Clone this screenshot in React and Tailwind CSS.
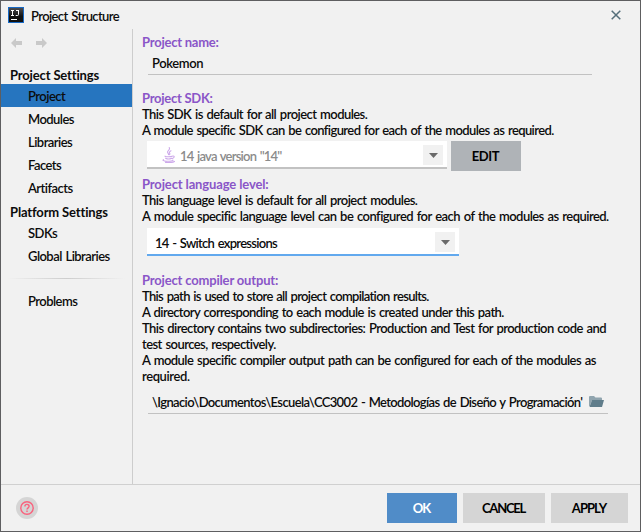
import React from "react";

const body = "tracking-[-0.54px] [word-spacing:1px]";

function Heading({ children, className = "" }) {
  return <h2 className={`whitespace-nowrap font-bold leading-[16px] text-[#8a56c8] ${className}`}>{children}</h2>;
}

function Line({ children, className = "" }) {
  return <p className={`h-4 whitespace-nowrap leading-[16px] ${className || body}`}>{children}</p>;
}

function NavItem({ children, active }) {
  return (
    <li className={`flex h-[23px] items-center whitespace-nowrap pl-[27px] pt-0.5 ${active ? "bg-[#2675bf]" : ""} ${body}`}>
      {children}
    </li>
  );
}

function ArrowButton() {
  return (
    <span className="mt-0.5 flex size-5 items-center justify-center bg-[#f1f1f1]">
      <svg width="9" height="5" viewBox="0 0 9 5"><path d="M0 0h9L4.5 5z" fill="#6a6a6a" /></svg>
    </span>
  );
}

function NavArrow({ flip }) {
  return (
    <svg width="11" height="10" viewBox="0 0 11 10" className={flip ? "-scale-x-100" : ""}>
      <path d="M0 5L5 0v3h6v4H5v3z" fill="#c9c9c9" />
    </svg>
  );
}

function Cup() {
  return (
    <svg width="14" height="16" viewBox="0 0 14 16" fill="none" stroke="#cda9ea" strokeWidth="1.1" strokeLinecap="round" className="mt-0.5">
      <path d="M7.2.6c1.8 2-3 3.3-1.4 5.2.4.6.9 1 .7 1.9M9 3.8C7.6 4.6 7 5.3 7.7 6.4c.3.5.2.9-.2 1.3" />
      <path d="M3 9.2c1.5.8 5.8.7 7.2 0M3.6 11.2c1.5.8 4.6.7 6 0M10.7 9c2-.4 2.2 1.7-.4 2.5M1.5 12.7c-2.2 1.2 3 1.7 6 1.5 2.2-.1 4-.5 3.4-1.2M3.5 15.4c3 .4 7 .1 9-1" />
    </svg>
  );
}

export default function App() {
  return (
    <div className="flex h-[532px] w-[641px] flex-col overflow-hidden border border-[#5e5e60] bg-[#f1f1f1] font-['Lato','Noto_Sans',sans-serif] text-[13px] font-semibold text-[#0c0c0c]">
      <header className="flex h-7 shrink-0 items-center pl-[7px] pr-[19px]">
        <svg width="16" height="16" viewBox="0 0 16 16">
          <defs>
            <linearGradient id="tile" x1="0" y1="0" x2="0" y2="1">
              <stop offset="0" stopColor="#4b4b4d" />
              <stop offset="0.6" stopColor="#111" />
            </linearGradient>
          </defs>
          <rect width="16" height="16" fill="#1769c5" />
          <rect x="1" y="1" width="14" height="14" fill="url(#tile)" />
          <path d="M3 3.5h3M4.5 3.5v5M3 8.5h3M8 3.5h3M10.5 3.5v4q0 1-1 1H7.7M3 12.5h6" fill="none" stroke="#fff" strokeWidth="1" />
        </svg>
        <h1 className="ml-[7px] mt-[3px] whitespace-nowrap tracking-[-0.62px] [word-spacing:1px]">Project Structure</h1>
        <svg width="10" height="10" viewBox="0 0 10 10" className="ml-auto" stroke="#546e7a" strokeWidth="1.5">
          <path d="M.7.7l8.6 8.6M9.3.7L.7 9.3" />
        </svg>
      </header>

      <div className="flex h-[456px] shrink-0 border-b border-[#d0d0d0]">
        <nav className="w-[132px] shrink-0 border-r border-[#cdcdcd]">
          <div className="flex h-7 items-center gap-[14px] pl-[10px]">
            <NavArrow />
            <NavArrow flip />
          </div>
          <h2 className="mt-[10px] h-[17px] whitespace-nowrap pl-[9px] font-bold leading-[17px] tracking-[-0.15px]">Project Settings</h2>
          <ul>
            <NavItem active>Project</NavItem>
            <NavItem>Modules</NavItem>
            <NavItem>Libraries</NavItem>
            <NavItem>Facets</NavItem>
            <NavItem>Artifacts</NavItem>
          </ul>
          <h2 className="mt-1 h-[18px] whitespace-nowrap pl-[9px] font-bold leading-[18px] tracking-[-0.15px]">Platform Settings</h2>
          <ul>
            <NavItem>SDKs</NavItem>
            <NavItem>Global Libraries</NavItem>
          </ul>
          <div className="mx-[7px] mt-[11px] h-px bg-linear-to-r from-transparent via-[#cdcdcd] to-transparent" />
          <ul className="mt-[10px]">
            <NavItem>Problems</NavItem>
          </ul>
        </nav>

        <main className="min-w-0 flex-1 pl-[9px] pt-[5px]">
          <Heading className="tracking-[-0.23px]">Project name:</Heading>
          <div className="ml-[6px] mt-1 flex h-[21px] w-[444px] items-center border-b border-[#c2c2c2] pl-1">
            <span className="tracking-[-0.4px]">Pokemon</span>
          </div>

          <Heading className="mt-[15px] tracking-[-0.27px]">Project SDK:</Heading>
          <Line className="tracking-[-0.56px] [word-spacing:1px]">This SDK is default for all project modules.</Line>
          <Line className="tracking-[-0.6px] [word-spacing:1px]">A module specific SDK can be configured for each of the modules as required.</Line>
          <div className="mt-[3px] flex pl-[5px]">
            <div className="flex h-7 w-[300px] items-center border-b-2 border-[#c2c2c2] bg-white pl-[15px] pr-1 text-[#8b8b8b]">
              <Cup />
              <span className="ml-[4px] mt-[5px] whitespace-nowrap tracking-[-0.78px] [word-spacing:1px]">14 java version "14"</span>
              <span className="ml-auto"><ArrowButton /></span>
            </div>
            <button className="ml-1 h-[30px] w-[70px] bg-[#afb3b7] pr-px pt-0.5 font-bold tracking-[-0.35px] text-black">EDIT</button>
          </div>

          <Heading className="mt-[5px] tracking-[-0.13px]">Project language level:</Heading>
          <Line className="tracking-[-0.56px] [word-spacing:1px]">This language level is default for all project modules.</Line>
          <Line>A module specific language level can be configured for each of the modules as required.</Line>
          <div className="ml-[5px] mt-1 flex h-7 w-[312px] items-center border-b-2 border-[#62a9ee] bg-white pl-2 pr-1">
            <span className="mt-[5px] whitespace-nowrap tracking-[-0.72px] [word-spacing:1px]">14 - Switch expressions</span>
            <span className="ml-auto"><ArrowButton /></span>
          </div>

          <Heading className="mt-4 tracking-[-0.17px]">Project compiler output:</Heading>
          <Line className="tracking-[-0.68px] [word-spacing:1px]">This path is used to store all project compilation results.</Line>
          <Line className="tracking-[-0.59px] [word-spacing:1px]">A directory corresponding to each module is created under this path.</Line>
          <Line className="tracking-[-0.565px] [word-spacing:1px]">This directory contains two subdirectories: Production and Test for production code and</Line>
          <Line className="tracking-[-0.56px] [word-spacing:1px]">test sources, respectively.</Line>
          <Line>A module specific compiler output path can be configured for each of the modules as</Line>
          <Line className="tracking-[-0.4px]">required.</Line>
          <div className="ml-[6px] mt-[7px] flex h-[23px] w-[460px] items-center border-b border-[#c2c2c2] pl-1">
            <span className="mt-0.5 w-[432px] whitespace-nowrap tracking-[-0.64px] [word-spacing:1px]">\Ignacio\Documentos\Escuela\CC3002 - Metodologías de Diseño y Programación'</span>
            <svg width="15" height="12" viewBox="0 0 15 12" className="ml-[5px]">
              <path d="M0 1q0-1 1-1h4l1.5 1.5H12q1 0 1 1V4H3L.8 10H0z" fill="#90a4ae" />
              <path d="M3 4h12l-2 7H.5z" fill="#607d8b" />
            </svg>
          </div>
        </main>
      </div>

      <footer className="flex flex-1 items-center pl-[15px] pr-[12px]">
        <span className="flex size-[22px] items-center justify-center rounded-full bg-[#d5d5d5]">
          <svg width="14" height="14" viewBox="0 0 14 14" fill="none" stroke="#f9627d" strokeWidth="1.4">
            <circle cx="7" cy="7" r="6.2" />
            <path d="M4.9 5.5C4.9 2.7 9.1 2.7 9.1 5.3 9.1 6.8 7 6.9 7 8.6M7 9.6v1.4" />
          </svg>
        </span>
        <div className="ml-auto flex gap-[6px] font-bold text-black">
          <button className="h-[30px] w-[70px] bg-[#508cc8] pr-px pt-0.5 tracking-[-1px] text-white">OK</button>
          <button className="h-[30px] w-[82px] bg-[#d5d5d5] pr-px pt-0.5 tracking-[-1.25px]">CANCEL</button>
          <button className="h-[30px] w-[77px] bg-[#d5d5d5] pr-px pt-0.5 tracking-[-0.95px]">APPLY</button>
        </div>
      </footer>
    </div>
  );
}
